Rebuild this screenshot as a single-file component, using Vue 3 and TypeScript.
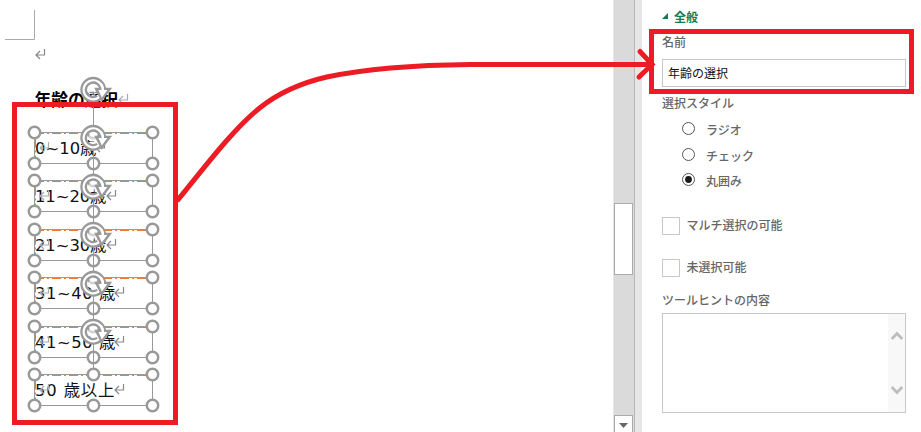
<script setup lang="ts">
interface Mark { x: number; y: number; faint?: boolean }
interface Option { label: string; width: number; top: number; baseline: number; text: string; end: number }

const options: Option[] = [
  { label: 'a', text: '0~10歳', width: 61.5, top: 132.5, baseline: 154, end: 96 },
  { label: 'b', text: '11~20歳', width: 71.5, top: 180.5, baseline: 202, end: 107 },
  { label: 'c', text: '21~30歳', width: 71.5, top: 229.5, baseline: 251, end: 107 },
  { label: 'd', text: '31~40 歳', width: 80.5, top: 277.5, baseline: 299, end: 115 },
  { label: 'e', text: '41~50 歳', width: 80.5, top: 326.5, baseline: 348, end: 115 },
  { label: 'f', text: '50 歳以上', width: 79.5, top: 374.5, baseline: 396, end: 115 },
]

const marks: Mark[] = [
  { x: 35, y: 49 },
  { x: 118, y: 94, faint: true },
  ...options.map(o => ({ x: 39, y: o.baseline - 12, faint: true })),
  ...options.map(o => ({ x: o.end - 1, y: o.baseline - 12 })),
]

const styles: string[] = ['ラジオ', 'チェック', '丸囲み']
const selected = '丸囲み'
const checks: string[] = ['マルチ選択の可能', '未選択可能']
</script>

<template>
  <main class="window">
    <section class="document">
      <svg class="canvas" width="613" height="432" viewBox="0 0 613 432">
        <defs>
          <g id="rotate" fill="none">
            <circle r="9.2" stroke="#fff" stroke-width="5" />
            <circle r="5" fill="#fff" fill-opacity=".55" />
            <circle r="11.8" stroke="#999" stroke-width="2.3" />
            <path d="M7.2 -1 A7.3 7.3 0 1 0 4 6.1" stroke="#999" stroke-width="2.3" />
            <path d="M1 -2 H19 L8.4 12 Z" fill="#999" />
            <path d="M5.2 .2 H8.3 Q8.4 -4.5 6.4 -7.2 L9.2 -6 Q11 -3.5 10.9 .2 H14.2 L8.6 7.6 Z" fill="#fff" />
          </g>
          <path id="return" d="M9.5 0 V6 H1 M5 2 L1 6 L5 10" />
        </defs>
        <path d="M34.5 10 V39.5 H5" fill="none" stroke="#aaa" />
        <text class="title" x="34.5" y="105.5" textLength="83.5">年齢の選択</text>
        <text v-for="o in options" :key="o.label" class="option" x="35" :y="o.baseline - 0.4" :textLength="o.width" xml:space="preserve">{{ o.text }}</text>
        <use v-for="(m, i) in marks" :key="i" href="#return" :transform="`translate(${m.x} ${m.y})`" fill="none" :stroke="m.faint ? '#aaa' : '#888'" stroke-width="1.2" />
        <g v-for="o in options" :key="o.text" fill="none" stroke="#999">
          <rect x="34.5" :y="o.top" width="118" height="31" />
          <path :d="`M35 ${o.top + 1} H152`" stroke="#ed7d31" stroke-dasharray="9 3 2 3" />
          <path :d="`M35.5 ${o.top + 6} V${o.top + 30}`" stroke="#ed7d31" stroke-dasharray="9 3 2 3" />
          <g fill="#fff" stroke-width="2.5">
            <template v-for="x in [34.5, 93.5, 152.5]" :key="x">
              <circle :cx="x" :cy="o.top" r="5.7" />
              <circle :cx="x" :cy="o.top + 31" r="5.7" />
            </template>
          </g>
        </g>
        <g v-for="o in options" :key="o.label + 'r'">
          <path :d="`M93.5 ${o.top - 6} V${o.top - 31}`" stroke="#999" />
          <use href="#rotate" :transform="`translate(93.2 ${o.top - 42.7})`" />
        </g>
      </svg>
    </section>

    <aside class="scrollbar">
      <div class="thumb"></div>
      <div class="down">
        <svg width="9" height="5" viewBox="0 0 9 5"><path d="M0 0 H9 L4.5 5 Z" fill="#666" /></svg>
      </div>
    </aside>
    <div class="splitter"></div>

    <section class="panel">
      <header class="heading">
        <svg width="6" height="6" viewBox="0 0 6 6"><path d="M6 0 V6 H0 Z" fill="#107c50" /></svg>
        <span>全般</span>
      </header>
      <div class="label">名前</div>
      <div class="field">年齢の選択</div>
      <div class="label group-title">選択スタイル</div>
      <div class="radios">
        <div v-for="s in styles" :key="s" class="radio">
          <svg width="13" height="13" viewBox="0 0 13 13">
            <circle cx="6.5" cy="6.5" r="6" fill="#fff" stroke="#555" />
            <circle v-if="s === selected" cx="6.5" cy="6.5" r="3.4" fill="#1a1a1a" />
          </svg>
          <span>{{ s }}</span>
        </div>
      </div>
      <div class="checks">
        <div v-for="c in checks" :key="c" class="check">
          <i class="box"></i>
          <span>{{ c }}</span>
        </div>
      </div>
      <div class="label hint">ツールヒントの内容</div>
      <div class="textarea">
        <div class="rail">
          <svg width="12" height="9" viewBox="0 0 12 9"><path d="M.7 8 L6 2.5 L11.3 8" /></svg>
          <svg width="12" height="9" viewBox="0 0 12 9"><path d="M.7 1 L6 6.5 L11.3 1" /></svg>
        </div>
      </div>
    </section>

    <svg class="callout" width="921" height="432" viewBox="0 0 921 432">
      <rect x="14.5" y="104.5" width="161" height="318" />
      <rect x="651.5" y="31.5" width="260" height="60" />
      <path d="M177 201 C201 172 232 130 260 107.7 C281 91 303 82.5 326.7 77 C370 68 420 65 470 64.5 H651" />
      <path d="M640 51.5 L652 64.5 L639 77" stroke-linecap="round" />
    </svg>
  </main>
</template>

<style>
body { margin: 0; background: #fff; overflow: hidden; }
</style>

<style scoped>
.window {
  position: relative;
  display: flex;
  width: 921px;
  height: 432px;
  overflow: hidden;
  background: #fff;
  font-family: "Noto Sans CJK JP", sans-serif;
}
.document { width: 613px; }
.canvas { display: block; }
.title { font: bold 16.7px "Noto Sans CJK JP", sans-serif; }
.option { font: 16.4px "DejaVu Sans", "Noto Sans CJK JP", sans-serif; fill: #111; white-space: pre; }

.scrollbar {
  box-sizing: border-box;
  display: flex;
  flex-direction: column;
  justify-content: space-between;
  width: 22px;
  padding: 203px 1px 0 0;
  border-left: 1px solid #e6e6e6;
  border-right: 1px solid #b8b8b8;
  background: #dadada;
}
.thumb, .down {
  box-sizing: border-box;
  width: 19px;
  border: 1px solid #ababab;
  background: #fff;
}
.thumb { height: 72px; }
.down {
  display: flex;
  justify-content: center;
  height: 17px;
  padding-top: 7px;
  border-bottom: 0;
}
.splitter { width: 7px; background: #e6e6e6; }

.panel {
  box-sizing: border-box;
  width: 279px;
  padding: 6px 15px 0 20px;
  color: #666;
  font-size: 12px;
  font-weight: 500;
}
.heading {
  display: flex;
  align-items: center;
  gap: 6px;
  height: 20px;
  color: #107c50;
  font-weight: 700;
}
.label { height: 16px; margin-top: 8px; line-height: 16px; }
.field {
  box-sizing: border-box;
  height: 28px;
  margin-top: 9px;
  padding-left: 5px;
  border: 1px solid #c8c8c8;
  color: #111;
  font-weight: 400;
  line-height: 25px;
}
.group-title { margin-top: 8px; }
.radios {
  display: grid;
  gap: 12.5px;
  margin-top: 11px;
  padding-left: 20px;
}
.radio { display: flex; gap: 11px; height: 13px; line-height: 16px; }
.checks { display: grid; gap: 24px; margin-top: 31px; }
.check { display: flex; gap: 6.5px; height: 18px; line-height: 15px; }
.box { box-sizing: border-box; width: 18px; height: 18px; border: 1px solid #c8c8c8; }
.hint { margin-top: 15px; }
.textarea {
  box-sizing: border-box;
  display: flex;
  justify-content: flex-end;
  height: 100px;
  margin-top: 5px;
  border: 1px solid #c8c8c8;
}
.rail {
  box-sizing: border-box;
  display: flex;
  flex-direction: column;
  align-items: center;
  justify-content: space-between;
  width: 17px;
  padding: 17px 0;
  background: #f8f8f8;
}
.rail path { fill: none; stroke: #bdbdbd; stroke-width: 2.8; }

.callout {
  position: absolute;
  top: 0;
  left: 0;
  fill: none;
  stroke: #ed1c24;
  stroke-width: 5;
}
</style>
